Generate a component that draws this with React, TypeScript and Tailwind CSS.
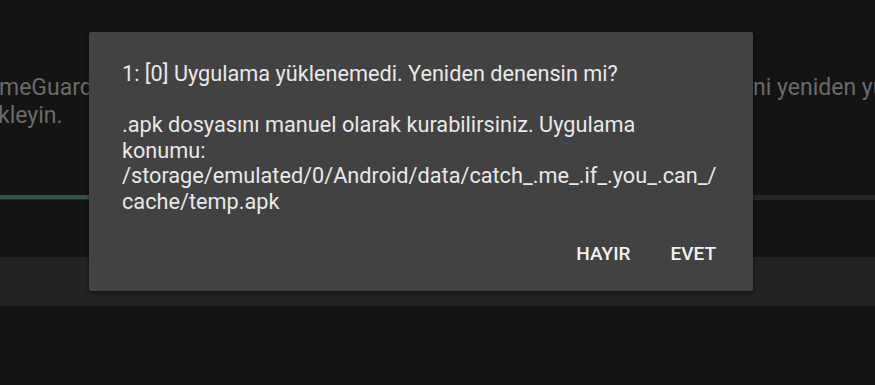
export default function App() {
  const font = { fontFamily: "Roboto, 'Noto Sans', sans-serif" };

  return (
    <div className="relative w-[875px] h-[385px] overflow-hidden bg-[#141414]" style={font}>
      {/* background screen */}
      <div className="flex flex-col">
        <div className="pt-[74px] text-[23px] leading-[28px] text-[#6a6a6a] whitespace-nowrap">
          <div className="flex">
            <span className="-ml-[1px] w-[90px] overflow-hidden">meGuard</span>
            <span className="ml-auto w-[122px] overflow-hidden">ni yeniden yükleyin</span>
          </div>
          <div className="-ml-[2px]">kleyin.</div>
        </div>
        <div className="mt-[65px] flex h-[5px]">
          <div className="w-[40%] flex flex-col">
            <div className="h-[4px] bg-[#36524e]" />
            <div className="h-[1px] bg-[#22302e]" />
          </div>
          <div className="flex-1 bg-[#262626]" />
        </div>
        <div className="mt-[57px] h-[49px] bg-[#232323]" />
      </div>

      {/* dialog */}
      <div className="absolute left-[89px] top-[32px] w-[664px] h-[259px] rounded-[2px] bg-[#424242] shadow-[0_2px_4px_rgba(0,0,0,0.5)] flex flex-col">
        <div className="pt-[29px] pl-[33px] pr-[30px] text-[21.7px] leading-[25.6px] text-[#e8e8e8] whitespace-nowrap">
          <div>1: [0] Uygulama yüklenemedi. Yeniden denensin mi?</div>
          <div>&nbsp;</div>
          <div>.apk dosyasını manuel olarak kurabilirsiniz. Uygulama</div>
          <div>konumu:</div>
          <div>/storage/emulated/0/Android/data/catch_.me_.if_.you_.can_/</div>
          <div>cache/temp.apk</div>
        </div>
        <div className="mt-[27px] flex justify-end gap-[40px] pr-[37px] text-[19px] leading-[24px] font-medium text-[#f2f2f2]">
          <button className="uppercase">Hayır</button>
          <button className="uppercase">Evet</button>
        </div>
      </div>
    </div>
  );
}
